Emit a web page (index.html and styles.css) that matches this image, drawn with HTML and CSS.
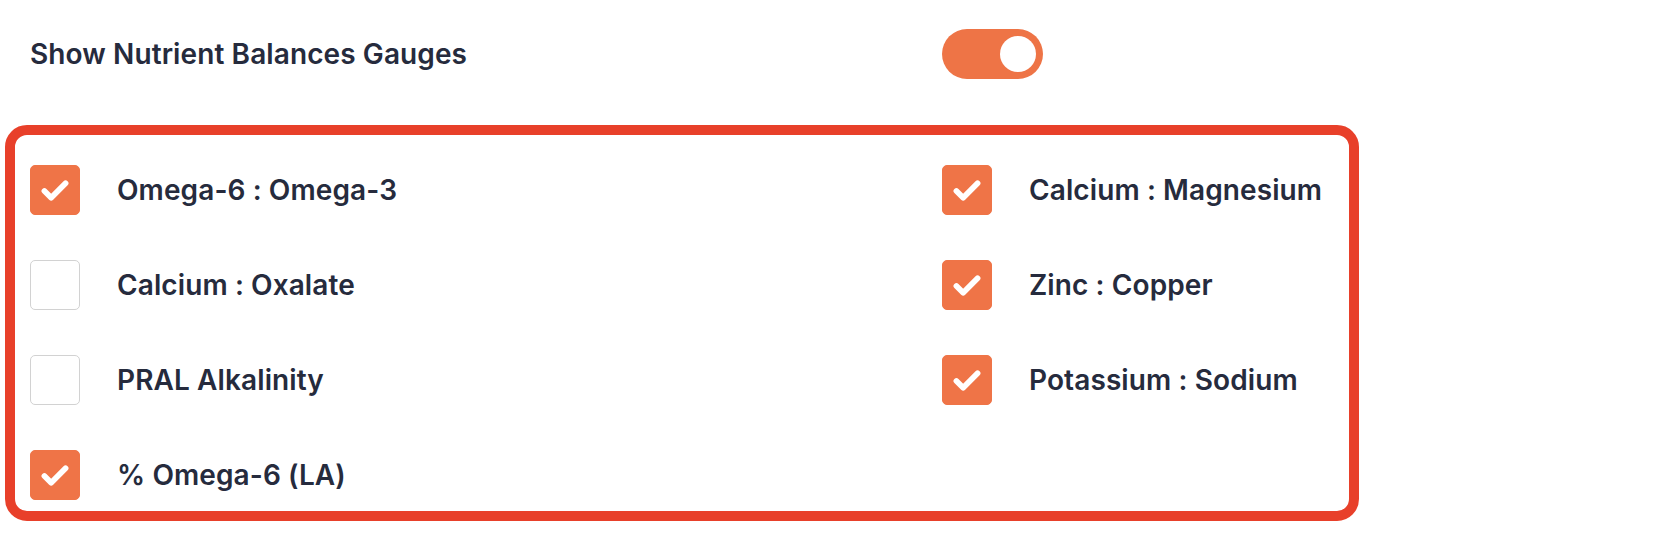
FILE: index.html
```html
<!DOCTYPE html>
<html>

<head>
	<title>Nutrient Balances</title>
	<link rel="stylesheet" href="styles.css">
</head>

<body>
	<div class="setting-row">
		<span class="setting-label">Show Nutrient Balances Gauges</span>
		<span class="toggle"><span class="knob"></span></span>
	</div>

	<div class="gauges">
		<label class="option"><span class="box checked"><svg viewBox="0 0 50 50"><polyline points="14,26 21,33 36,18"></polyline></svg></span>Omega-6 : Omega-3</label>
		<label class="option"><span class="box"></span>Calcium : Oxalate</label>
		<label class="option"><span class="box"></span>PRAL Alkalinity</label>
		<label class="option"><span class="box checked"><svg viewBox="0 0 50 50"><polyline points="14,26 21,33 36,18"></polyline></svg></span>% Omega-6 (LA)</label>
		<label class="option"><span class="box checked"><svg viewBox="0 0 50 50"><polyline points="14,26 21,33 36,18"></polyline></svg></span>Calcium : Magnesium</label>
		<label class="option"><span class="box checked"><svg viewBox="0 0 50 50"><polyline points="14,26 21,33 36,18"></polyline></svg></span>Zinc : Copper</label>
		<label class="option"><span class="box checked"><svg viewBox="0 0 50 50"><polyline points="14,26 21,33 36,18"></polyline></svg></span>Potassium : Sodium</label>
	</div>
</body>

</html>
```

FILE: styles.css
```css
body {
	background-color: #ffffff;
	color: #262b3d;
	font-family: Inter, "Noto Sans", sans-serif;
	font-size: 28px;
	font-weight: 560;
	letter-spacing: 0.1px;
	margin: 0;
	padding: 0;
}

.setting-row {
	display: grid;
	grid-template-columns: 912px auto;
	align-items: center;
	padding: 29px 0 0 30px;
}

.toggle {
	display: flex;
	align-items: center;
	justify-content: flex-end;
	width: 101px;
	height: 50px;
	padding: 0 7px;
	box-sizing: border-box;
	border-radius: 25px;
	background-color: #ee7446;
}

.toggle .knob {
	width: 36px;
	height: 36px;
	border-radius: 50%;
	background-color: #ffffff;
}

.gauges {
	display: grid;
	grid-template-columns: 912px 1fr;
	grid-template-rows: repeat(4, 50px);
	grid-auto-flow: column;
	row-gap: 45px;
	width: 1354px;
	box-sizing: border-box;
	margin: 46px 0 0 5px;
	padding: 30px 15px 11px 15px;
	border: 10px solid #e8402a;
	border-radius: 22px;
}

.option {
	display: flex;
	align-items: center;
	gap: 37px;
}

.box {
	display: block;
	width: 50px;
	height: 50px;
	box-sizing: border-box;
	border: 1px solid #d2d2d2;
	border-radius: 5px;
	flex-shrink: 0;
}

.box.checked {
	background-color: #ef7447;
	border-color: #ef7447;
}

.box svg {
	display: block;
	width: 48px;
	height: 48px;
}

.box polyline {
	fill: none;
	stroke: #ffffff;
	stroke-width: 6;
	stroke-linecap: round;
	stroke-linejoin: round;
}
```
